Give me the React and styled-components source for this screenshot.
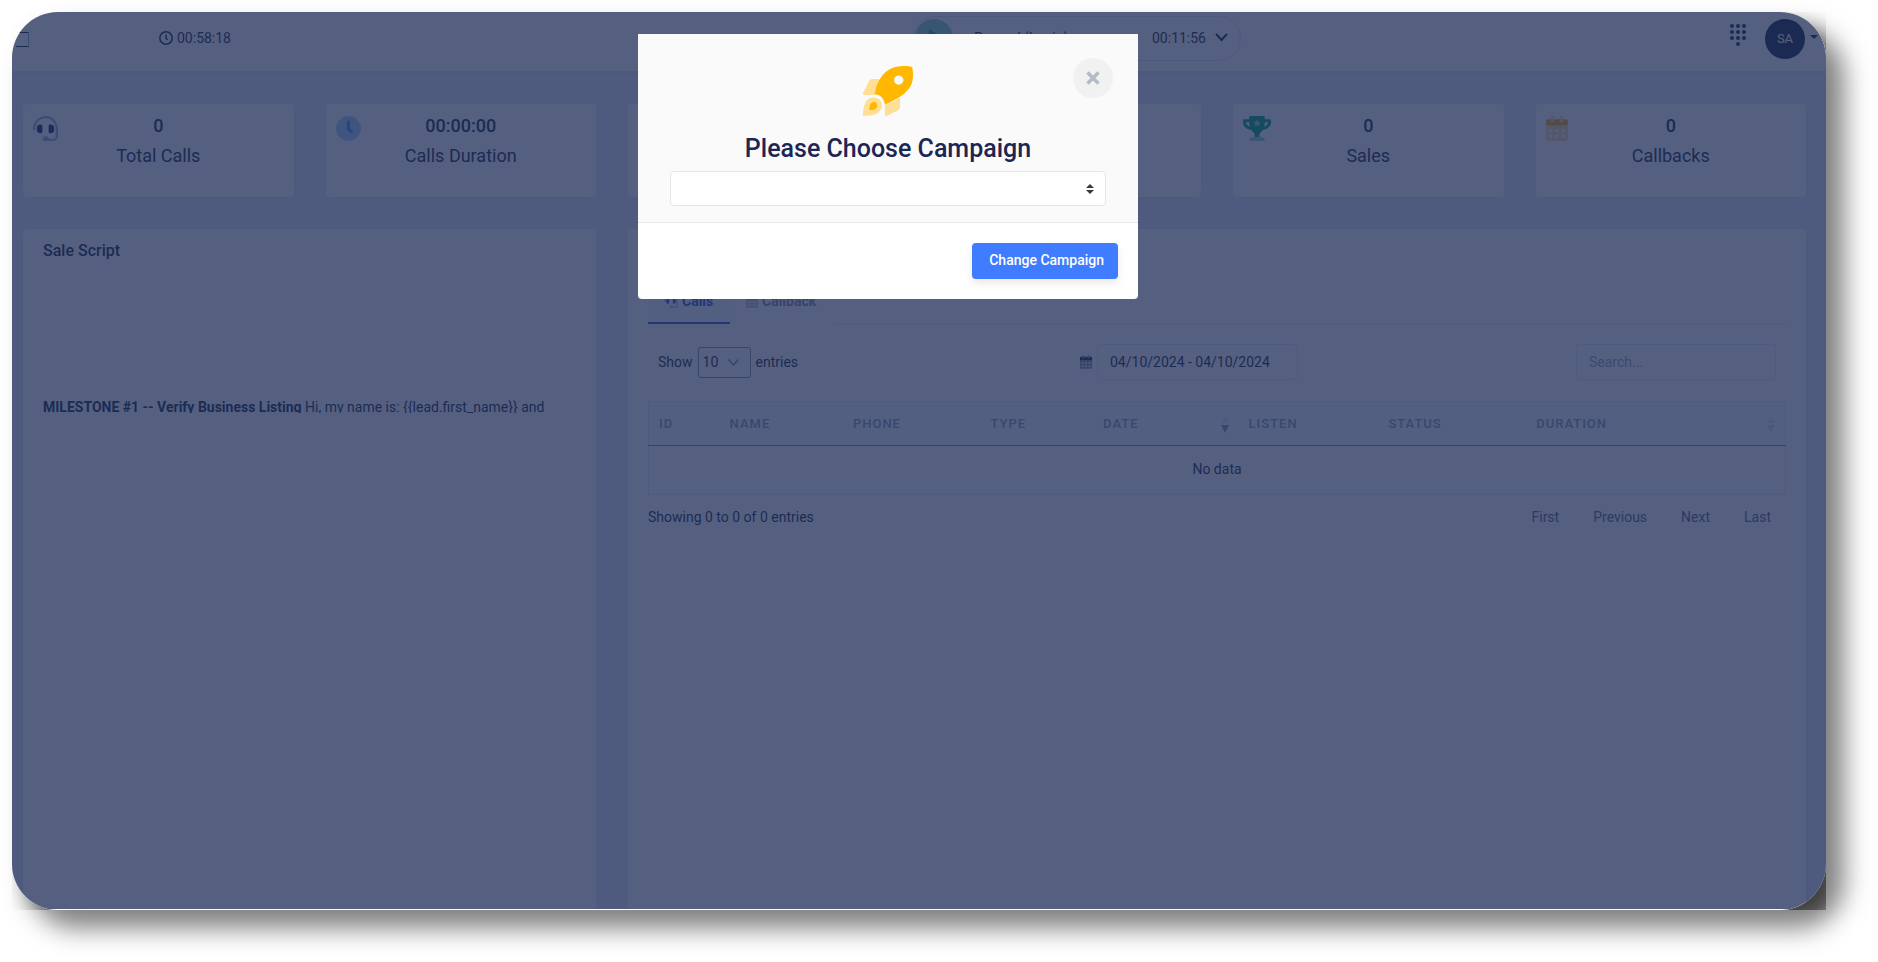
import React from "react";
import styled, { createGlobalStyle, css } from "styled-components";

const GlobalStyle = createGlobalStyle`
  *, *::before, *::after { box-sizing: border-box; }
  body {
    margin: 0;
    background: #fff;
    color: #1b2e4b;
    font-family: Roboto, "Liberation Sans", sans-serif;
    font-size: 14px;
    line-height: 20px;
  }
  button, input, select { font: inherit; color: inherit; }
`;

const Stage = styled.div`
  min-height: 100vh;
  padding: 12px 52px 52px 12px;
  display: flex;
`;

const FrameShadow = styled.div`
  flex: 1;
  display: flex;
  border-radius: 46px;
  box-shadow: 18px 18px 26px rgba(0, 0, 0, 0.5);
`;

const FrameClip = styled.div`
  flex: 1;
  display: flex;
  overflow: hidden;
`;

const Frame = styled.div`
  flex: 1;
  position: relative;
  display: flex;
  flex-direction: column;
  overflow: hidden;
  padding-bottom: 1px;
  border-radius: 46px;
  background: linear-gradient(#fff, #fff) bottom / 100% 1px no-repeat #e5ecf8;
  box-shadow: 18px 18px 26px rgba(0, 0, 0, 0.5);
`;

const TopBar = styled.header`
  display: flex;
  align-items: flex-start;
  height: 59px;
  background: #fff;
  box-shadow: 0 0 8px rgba(28, 43, 85, 0.12);
`;

const MenuButton = styled.button`
  width: 13px;
  height: 15px;
  margin: 20px 0 0 4px;
  padding: 0;
  border: 1px solid #a5afc4;
  border-width: 1px 1px 1px 0;
  border-top-color: #1b2e4b;
  border-bottom-color: #1b2e4b;
  background: none;
`;

const SessionTime = styled.div`
  display: flex;
  align-items: center;
  gap: 4px;
  margin: 16px 0 0 130px;
`;

const StatusMenu = styled.button`
  display: flex;
  align-items: center;
  width: 328px;
  height: 45px;
  margin: 4px 0 0 682px;
  padding: 0 12px 2px 1px;
  border: 1px solid #dbe1ee;
  border-radius: 23px;
  background: #fff;
  svg { display: block; }
`;

const StatusName = styled.span`
  flex: 1;
  padding-left: 21px;
  text-align: left;
`;

const Chevron = styled.span`
  margin-left: 9px;
`;

const TopActions = styled.div`
  display: flex;
  margin: 7px 8px 0 auto;
`;

const IconButton = styled.button`
  padding: 5px 0 0;
  border: 0;
  background: none;
  display: flex;
`;

const Avatar = styled.button`
  width: 40px;
  height: 40px;
  margin-left: 19px;
  padding: 0;
  border: 0;
  border-radius: 50%;
  background: #1b2a4e;
  color: #fff;
  font-size: 13px;
`;

const Caret = styled.span`
  margin: 16px 0 0 5px;
  border: 4px solid transparent;
  border-top-color: #1b2e4b;
  border-bottom: 0;
  height: 4px;
`;

const Board = styled.main`
  flex: 1;
  display: grid;
  grid-template-columns: repeat(6, 1fr);
  grid-template-rows: auto 1fr;
  gap: 32px;
  padding: 33px 20px 0 11px;
`;

const surface = css`
  background: #fff;
  border-radius: 4px;
  box-shadow: 0 0 12px rgba(28, 43, 85, 0.05);
`;

const StatCard = styled.section`
  ${surface}
  display: grid;
  grid-template-columns: 26px 1fr 26px;
  height: 93px;
  padding: 12px 10px;
`;

const StatText = styled.div`
  text-align: center;
  font-size: 18px;
  line-height: 20px;
`;

const StatValue = styled.div`
  font-weight: 500;
  margin-bottom: 10px;
`;

const Panel = styled.section`
  ${surface}
  grid-column: span ${(p) => p.$span};
  padding: ${(p) => p.$pad};
  border-radius: 4px 4px 0 0;
`;

const PanelTitle = styled.h2`
  margin: 0;
  font-size: 16px;
  line-height: 20px;
  font-weight: 500;
`;

const ScriptText = styled.p`
  height: 16px;
  margin: 136px 0 0;
  overflow: hidden;
  line-height: 20px;
  white-space: nowrap;
  b { font-weight: 700; }
`;

const Tabs = styled.nav`
  display: flex;
  align-items: stretch;
  height: 45px;
  font-weight: 700;
`;

const Tab = styled.button`
  display: flex;
  align-items: center;
  gap: 4px;
  width: ${(p) => p.$width}px;
  padding: 0 0 0 16px;
  border: 0;
  border-bottom: 2px solid ${(p) => (p.$active ? "#2f5be6" : "transparent")};
  background: ${(p) => (p.$active ? "#f8f9fe" : "none")};
  color: ${(p) => (p.$active ? "#2f5be6" : "#8392a5")};
  font-weight: 700;
`;

const TabRule = styled.span`
  flex: 1;
  border-bottom: 1px solid #e5e9f2;
`;

const Tools = styled.div`
  display: grid;
  grid-template-columns: 422px 1fr auto;
  align-items: center;
  height: 36px;
  margin: 20px 10px 21px;
`;

const LengthLabel = styled.label`
  display: flex;
  align-items: center;
  gap: 5px;
`;

const SelectWrap = styled.span`
  position: relative;
  display: flex;
  align-items: center;
  svg { position: absolute; right: 12px; pointer-events: none; }
`;

const LengthSelect = styled.select`
  appearance: none;
  width: 53px;
  height: 31px;
  padding: 0 4px;
  border: 1px solid #8392a5;
  border-radius: 3px;
  background: #fff;
`;

const DateLabel = styled.label`
  display: flex;
  align-items: center;
  gap: 5px;
`;

const TextInput = styled.input`
  width: ${(p) => p.$width}px;
  height: 36px;
  padding: 0 12px;
  border: 1px solid #e5e9f2;
  border-radius: 4px;
  background: #fff;
  &::placeholder { color: #97a3b9; }
`;

const SearchLabel = styled.label`
  display: flex;
`;

const Table = styled.table`
  width: 100%;
  table-layout: fixed;
  border-collapse: collapse;
  border: 1px solid #e5e9f2;
  th {
    height: 44px;
    padding: 0 10px;
    background: #f8f9fe;
    border-bottom: 1px solid #8392a5;
    color: #8f9db6;
    font-size: 13px;
    font-weight: 500;
    letter-spacing: 1px;
    text-align: left;
  }
  td {
    height: 49px;
    padding: 0 0 2px;
    text-align: center;
  }
`;

const HeadCell = styled.div`
  display: flex;
  justify-content: space-between;
  align-items: center;
`;

const TableFoot = styled.footer`
  display: flex;
  justify-content: space-between;
  align-items: center;
  margin-top: 12px;
`;

const Pager = styled.nav`
  display: flex;
  gap: 34px;
  padding-right: 15px;
`;

const PageButton = styled.button`
  padding: 0;
  border: 0;
  background: none;
  color: #5a6785;
`;

const Backdrop = styled.div`
  position: absolute;
  inset: 0 0 1px;
  display: flex;
  justify-content: center;
  align-items: flex-start;
  padding: 22px 62px 0 0;
  background: rgba(28, 43, 85, 0.75);
`;

const Dialog = styled.form`
  width: 500px;
  background: #fff;
  border-radius: 0 0 4px 4px;
`;

const DialogHead = styled.div`
  position: relative;
  display: flex;
  flex-direction: column;
  align-items: center;
  padding: 32px 32px 16px;
  background: #fafafa;
  border-bottom: 1px solid #e6e7ea;
`;

const CloseButton = styled.button`
  position: absolute;
  top: 24px;
  right: 25px;
  display: grid;
  place-items: center;
  width: 40px;
  height: 40px;
  padding: 0;
  border: 0;
  border-radius: 50%;
  background: #f1f1f1;
`;

const DialogTitle = styled.label`
  margin: 17px 0 6px;
  font-size: 25px;
  line-height: 32px;
  font-weight: 500;
  color: #1c2655;
`;

const CampaignWrap = styled(SelectWrap)`
  align-self: stretch;
`;

const CampaignSelect = styled.select`
  appearance: none;
  width: 100%;
  height: 35px;
  padding: 0 12px;
  border: 1px solid #e3e5e8;
  border-radius: 4px;
  background: #fff;
`;

const DialogFoot = styled.div`
  display: flex;
  justify-content: flex-end;
  padding: 20px;
`;

const PrimaryButton = styled.button`
  height: 36px;
  padding: 0 14px 2px 17px;
  border: 0;
  border-radius: 4px;
  background: #407cff;
  box-shadow: 0 4px 8px rgba(0, 0, 0, 0.09);
  color: #fff;
  font-weight: 500;
  white-space: nowrap;
`;

const HeadsetIcon = ({ size = 25, main = "#1b2e6b", soft = "#a5b1cf" }) => (
  <svg width={size} height={size} viewBox="0 0 512 512" aria-hidden="true">
    <path fill={main} d="M192 208c0-18-14-32-32-32h-16c-35 0-64 29-64 64v48c0 35 29 64 64 64h16c18 0 32-14 32-32V208zm176 144c35 0 64-29 64-64v-48c0-35-29-64-64-64h-16c-18 0-32 14-32 32v112c0 18 14 32 32 32h16z" />
    <path fill={soft} d="M256 0C114 0 5 119 0 256v16c0 9 7 16 16 16h16c9 0 16-7 16-16v-16c0-115 93-208 208-208s208 93 208 208v166c0 23-19 42-42 42h-98c0-29-21-48-48-48h-32c-27 0-48 22-48 48s22 48 48 48h178c50 0 90-40 90-90V256C507 119 398 0 256 0z" />
  </svg>
);

const ClockIcon = () => (
  <svg width="25" height="25" viewBox="0 0 24 24" aria-hidden="true">
    <circle cx="12" cy="12" r="12" fill="#a8d4ff" />
    <path d="M12 5.500v7l3 2.500" fill="none" stroke="#3f9bf5" strokeWidth="3" strokeLinecap="round" strokeLinejoin="round" />
  </svg>
);

const TrophyIcon = () => (
  <svg width="28" height="25" viewBox="0 0 576 512" aria-hidden="true">
    <path fill="#04a87e" d="M552 64H448V24c0-13-11-24-24-24H152c-13 0-24 11-24 24v40H24C11 64 0 75 0 88v56c0 36 22 72 62 100 32 22 70 36 110 41 31 52 68 75 68 75v72h96v-72s37-23 68-75c40-5 78-19 110-41 40-28 62-64 62-100V88c0-13-11-24-24-24zM99 192c-19-14-35-34-35-48v-16h64c1 33 5 62 12 88-15-6-29-13-41-24zm413-48c0 14-16 34-35 48-12 11-26 18-41 24 7-26 12-55 12-88h64v16z" />
    <path fill="#8fdcca" d="m288 66 24 50 54 8-39 38 9 54-48-26-48 26 9-54-39-38 54-8zM368 432H208c-44 0-80 26-80 60 0 12 8 20 20 20h280c12 0 20-8 20-20 0-34-36-60-80-60z" />
  </svg>
);

const CalendarIcon = ({ size = 25, main = "#f5a623", soft = "#fbdba5" }) => (
  <svg width={Math.round((size * 7) / 8)} height={size} viewBox="0 0 448 512" aria-hidden="true">
    <path fill={soft} fillRule="evenodd" d="M0 192v272c0 27 21 48 48 48h352c27 0 48-21 48-48V192H0zm64 72h64v56H64zm128 0h64v56h-64zm128 0h64v56h-64zM64 384h64v56H64zm128 0h64v56h-64zm128 0h64v56h-64z" />
    <path fill={main} d="M448 112v80H0v-80c0-27 21-48 48-48h352c27 0 48 21 48 48z" />
    <path fill={soft} d="M96 16c0-9 7-16 16-16h32c9 0 16 7 16 16v112H96zM288 16c0-9 7-16 16-16h32c9 0 16 7 16 16v112h-64z" />
  </svg>
);

const RocketIcon = () => (
  <svg width="50" height="50" viewBox="0 0 512 512" aria-hidden="true">
    <path fill="#ffdf96" d="M189 132H95c-13 0-26 8-32 20L3 271c-2 4-3 8-3 11 0 8 6 14 14 14h104c15-60 36-115 71-164zM380 323c-42 30-93 54-156 75v100c0 8 6 14 14 14 3 0 7-1 10-3l112-56c12-6 20-19 20-32z" />
    <path fill="#ffdf96" fillRule="evenodd" d="M99 322c-70 4-99 78-99 190 113 0 187-29 192-97 5-62-39-98-93-93zm6 46c26-5 45 17 42 43-4 29-30 43-83 43 0-56 14-82 41-86z" />
    <path fill="#ffb700" d="M105 368c26-5 45 17 42 43-4 29-30 43-83 43 0-56 14-82 41-86z" />
    <path fill="#ffb700" fillRule="evenodd" d="M505 19c-1-5-6-9-11-11C462 0 437 0 412 0 258 0 184 90 139 206l-21 84c60 0 100 48 106 104 31-10 82-35 125-60 89-56 163-112 163-234 0-25 0-49-7-81zM366 192c-26 0-48-21-48-48s22-48 48-48 48 22 48 48-22 48-48 48z" />
  </svg>
);

const SortIcon = ({ down }) => (
  <svg width="8" height="20" viewBox="0 0 8 20" aria-hidden="true">
    <path fill="#e3e8f3" d="M4 2l4 7H0z" />
    <path fill={down} d="M4 19l4-8H0z" />
  </svg>
);

const stats = [
  { id: "total", label: "Total Calls", value: "0", icon: <HeadsetIcon /> },
  { id: "duration", label: "Calls Duration", value: "00:00:00", icon: <ClockIcon /> },
  { id: "third" },
  { id: "fourth" },
  { id: "sales", label: "Sales", value: "0", icon: <TrophyIcon /> },
  { id: "callbacks", label: "Callbacks", value: "0", icon: <CalendarIcon /> },
];

const columns = [
  { name: "ID", width: "6.25%" },
  { name: "NAME", width: "10.85%" },
  { name: "PHONE", width: "12.1%" },
  { name: "TYPE", width: "9.9%" },
  { name: "DATE", width: "12.8%", sort: "#8f9db6" },
  { name: "LISTEN", width: "12.3%" },
  { name: "STATUS", width: "13%" },
  { name: "DURATION", width: "22.8%", sort: "#dfe4f0" },
];

export default function App() {
  return (
    <Stage>
      <GlobalStyle />
      <FrameShadow>
        <FrameClip>
          <Frame>
            <TopBar>
              <MenuButton aria-label="Menu" />
              <SessionTime>
                <svg width="14" height="14" viewBox="0 0 14 14" fill="none" stroke="#1b2e4b" strokeWidth="1.500" aria-hidden="true">
                  <circle cx="7" cy="7" r="6.200" />
                  <path d="M7 3.500v4l1.800 1.500" />
                </svg>
                00:58:18
              </SessionTime>
              <StatusMenu>
                <svg width="38" height="38" viewBox="0 0 38 38" aria-hidden="true">
                  <circle cx="19" cy="19" r="19" fill="#86dcc4" />
                  <path fill="#10b981" d="M14 10l14 9-14 9z" />
                </svg>
                <StatusName>Paused (Login)</StatusName>
                00:11:56
                <Chevron>
                  <svg width="13" height="9" viewBox="0 0 13 9" fill="none" stroke="#1b2e4b" strokeWidth="2" aria-hidden="true">
                    <path d="M1 1l5.500 6L12 1" />
                  </svg>
                </Chevron>
              </StatusMenu>
              <TopActions>
                <IconButton aria-label="Dial pad">
                  <svg width="16" height="22" viewBox="0 0 16 22" fill="#1b2e4b" aria-hidden="true">
                    {[2, 8, 14].map((x) => [2, 8, 14].map((y) => <circle key={`${x}-${y}`} cx={x} cy={y} r="2" />))}
                    <circle cx="8" cy="20" r="2" />
                  </svg>
                </IconButton>
                <Avatar>SA</Avatar>
                <Caret />
              </TopActions>
            </TopBar>

            <Board>
              {stats.map((s) => (
                <StatCard key={s.id}>
                  <span>{s.icon}</span>
                  <StatText>
                    <StatValue>{s.value}</StatValue>
                    {s.label}
                  </StatText>
                </StatCard>
              ))}

              <Panel $span={2} $pad="12px 20px">
                <PanelTitle>Sale Script</PanelTitle>
                <ScriptText>
                  <b>MILESTONE #1 -- Verify Business Listing</b> Hi, my name is: {"{{lead.first_name}}"} and
                </ScriptText>
              </Panel>

              <Panel $span={4} $pad="50px 20px 20px">
                <Tabs>
                  <Tab $active $width={82}>
                    <HeadsetIcon size={14} main="#2f5be6" soft="#a9bcf5" />
                    Calls
                  </Tab>
                  <Tab $width={104}>
                    <CalendarIcon size={14} main="#8392a5" soft="#c0c8d8" />
                    Callback
                  </Tab>
                  <TabRule />
                </Tabs>
                <Tools>
                  <LengthLabel>
                    Show
                    <SelectWrap>
                      <LengthSelect defaultValue="10">
                        <option>10</option>
                        <option>25</option>
                      </LengthSelect>
                      <svg width="11" height="7" viewBox="0 0 11 7" fill="none" stroke="#8392a5" strokeWidth="1.500" aria-hidden="true">
                        <path d="M.5.5l5 5.500 5-5.500" />
                      </svg>
                    </SelectWrap>
                    entries
                  </LengthLabel>
                  <DateLabel>
                    <CalendarIcon size={14} main="#1b2e4b" soft="#8d98b4" />
                    <TextInput $width={201} aria-label="Date range" defaultValue="04/10/2024 - 04/10/2024" />
                  </DateLabel>
                  <SearchLabel>
                    <TextInput $width={200} aria-label="Search" placeholder="Search..." />
                  </SearchLabel>
                </Tools>
                <Table>
                  <colgroup>
                    {columns.map((c) => (
                      <col key={c.name} width={c.width} />
                    ))}
                  </colgroup>
                  <thead>
                    <tr>
                      {columns.map((c) => (
                        <th key={c.name}>
                          <HeadCell>
                            {c.name}
                            {c.sort && <SortIcon down={c.sort} />}
                          </HeadCell>
                        </th>
                      ))}
                    </tr>
                  </thead>
                  <tbody>
                    <tr>
                      <td colSpan={8}>No data</td>
                    </tr>
                  </tbody>
                </Table>
                <TableFoot>
                  <span>Showing 0 to 0 of 0 entries</span>
                  <Pager>
                    {["First", "Previous", "Next", "Last"].map((p) => (
                      <PageButton key={p}>{p}</PageButton>
                    ))}
                  </Pager>
                </TableFoot>
              </Panel>
            </Board>

            <Backdrop>
              <Dialog>
                <DialogHead>
                  <RocketIcon />
                  <CloseButton type="button" aria-label="Close">
                    <svg width="14" height="14" viewBox="0 0 14 14" stroke="#b4bac6" strokeWidth="3.500" aria-hidden="true">
                      <path d="M1.500 1.500l11 11M12.500 1.500l-11 11" />
                    </svg>
                  </CloseButton>
                  <DialogTitle htmlFor="campaign">Please Choose Campaign</DialogTitle>
                  <CampaignWrap>
                    <CampaignSelect id="campaign" />
                    <svg width="8" height="10" viewBox="0 0 8 10" fill="#343a40" aria-hidden="true">
                      <path d="M4 0l4 4H0zM4 10l4-4H0z" />
                    </svg>
                  </CampaignWrap>
                </DialogHead>
                <DialogFoot>
                  <PrimaryButton type="button">Change Campaign</PrimaryButton>
                </DialogFoot>
              </Dialog>
            </Backdrop>
          </Frame>
        </FrameClip>
      </FrameShadow>
    </Stage>
  );
}
